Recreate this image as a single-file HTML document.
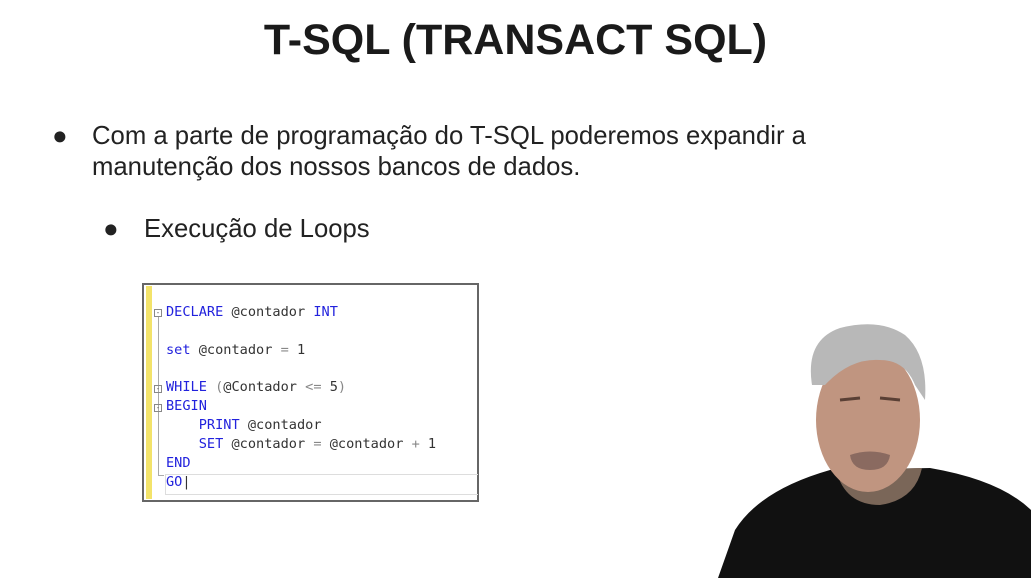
<!DOCTYPE html>
<html><head><meta charset="utf-8"><style>
body{margin:0;width:1031px;height:578px;background:#fff;position:relative;overflow:hidden;font-family:"Liberation Sans",sans-serif;color:#222}
.t{position:absolute;left:0;width:1031px;text-align:center;top:16px;font-size:43px;font-weight:bold;color:#1a1a1a}
.b{position:absolute;font-size:25.7px;line-height:31px;color:#222}
.code{position:absolute;left:142px;top:283px;width:337px;height:219px;border:2px solid #666;background:#fff;box-sizing:border-box}
.bar{position:absolute;left:2px;top:1px;width:6px;height:213px;background:#f3e36a}
.l{position:absolute;font-family:Consolas,"DejaVu Sans Mono",monospace;font-size:13.6px;color:#333;white-space:pre}
.k{color:#2222dd}.g{color:#888}
.m{position:absolute;width:8px;height:8px;border:1px solid #888;box-sizing:border-box;font-size:8px;line-height:6px;text-align:center;color:#666}
</style></head><body>
<div class="t">T-SQL (TRANSACT SQL)</div>
<div class="b" style="left:52px;top:121px">●</div>
<div class="b" style="left:92px;top:121px">Com a parte de programação do T-SQL poderemos expandir a<br>manutenção dos nossos bancos de dados.</div>
<div class="b" style="left:103px;top:214px">●</div>
<div class="b" style="left:144px;top:214px">Execução de Loops</div>
<div class="code"><div class="bar"></div>
<div style="position:absolute;left:14px;top:32px;width:1px;height:158px;background:#aaa"></div>
<div style="position:absolute;left:14px;top:190px;width:6px;height:1px;background:#aaa"></div>
<div style="position:absolute;left:21px;top:189px;width:312px;height:19px;border:1px solid #ddd;border-right:none"></div>
<div class="m" style="left:10px;top:24px">-</div>
<div class="m" style="left:10px;top:100px">-</div>
<div class="m" style="left:10px;top:119px">-</div>
<div class="l" style="left:22px;top:19px"><span class="k">DECLARE</span> @contador <span class="k">INT</span></div>
<div class="l" style="left:22px;top:57px"><span class="k">set</span> @contador <span class="g">=</span> 1</div>
<div class="l" style="left:22px;top:94px"><span class="k">WHILE</span> <span class="g">(</span>@Contador <span class="g">&lt;=</span> 5<span class="g">)</span></div>
<div class="l" style="left:22px;top:113px"><span class="k">BEGIN</span></div>
<div class="l" style="left:22px;top:132px">    <span class="k">PRINT</span> @contador</div>
<div class="l" style="left:22px;top:151px">    <span class="k">SET</span> @contador <span class="g">=</span> @contador <span class="g">+</span> 1</div>
<div class="l" style="left:22px;top:170px"><span class="k">END</span></div>
<div class="l" style="left:22px;top:189px"><span class="k">GO</span>|</div>
</div>
<svg style="position:absolute;left:0;top:0" width="1031" height="578">
<path d="M718 578 L735 530 Q760 490 830 470 L930 468 Q1000 480 1031 510 L1031 578 Z" fill="#111"/>
<path d="M836 470 Q845 505 880 505 Q915 500 922 468 Z" fill="#7a6658"/>
<ellipse cx="868" cy="420" rx="52" ry="72" fill="#c09580"/>
<path d="M812 385 Q805 340 840 328 Q880 318 905 335 Q928 355 925 400 L915 385 Q905 360 880 360 Q850 358 825 385 Z" fill="#b8b8b8"/>
<path d="M850 455 Q870 448 890 455 Q888 470 870 470 Q852 470 850 455Z" fill="#8a6a60"/>
<path d="M840 400 l20 -2 M880 398 l20 2" stroke="#5a4035" stroke-width="3"/>
</svg>
</body></html>
